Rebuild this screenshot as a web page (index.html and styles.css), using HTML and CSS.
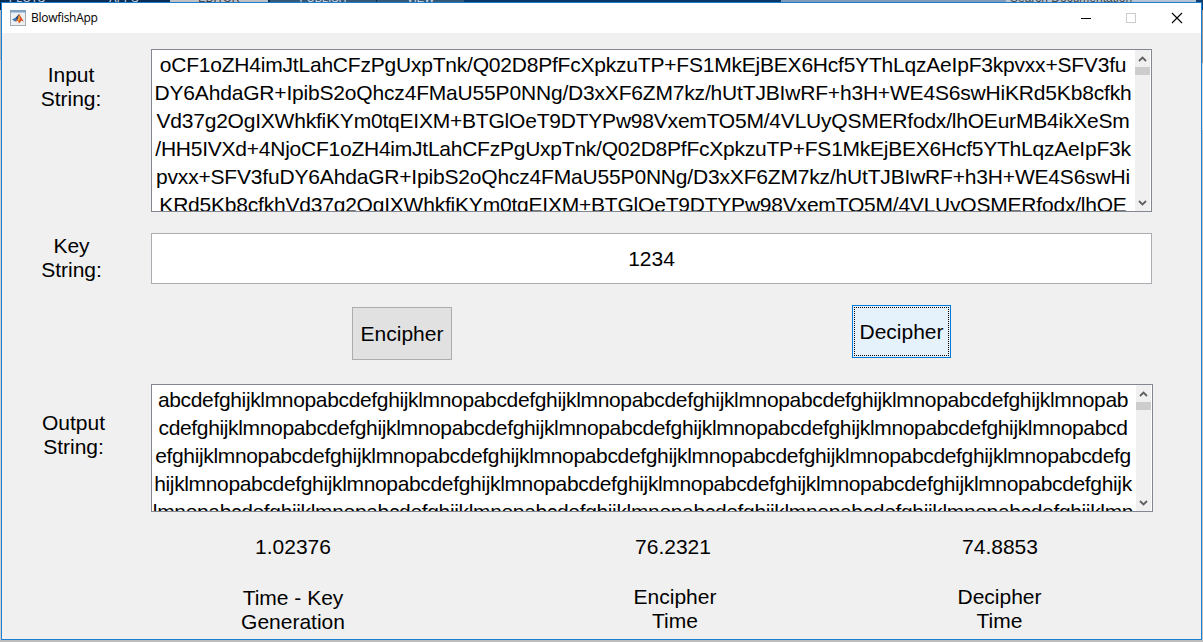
FILE: index.html
```html
<!DOCTYPE html>
<html lang="en">
<head>
<meta charset="utf-8">
<title>BlowfishApp</title>
<link rel="stylesheet" href="styles.css">
</head>
<body>
<div class="desktop">
  <div class="ribbon">
    <span class="tab tab-plots">PLOTS</span><span class="tab tab-apps">APPS</span><span class="tab tab-editor">EDITOR</span><span class="tab tab-publish">PUBLISH</span><span class="tab tab-view">VIEW</span><span class="ribbon-fill"></span><span class="ribbon-tools"></span><span class="ribbon-search">Search Documentation</span><span class="ribbon-end"></span>
  </div>
  <div class="middle">
    <div class="edge-left"></div>
    <main class="window">
      <header class="titlebar">
        <svg class="app-icon" width="16" height="16" viewBox="0 0 16 16">
          <rect x=".5" y=".5" width="15" height="15" fill="#eef1f4" stroke="#a3abb3"/>
          <rect x="0" y="0" width="16" height="2.5" fill="#7fa3c4"/>
          <path d="M2 9.5 5.5 7.8 7.5 10 5 11.5z" fill="#3a78b5"/>
          <path d="M5.5 7.8 9.3 3.8 8.5 8.5 7 10z" fill="#2b4a78"/>
          <path d="M9.3 3.8 11 7 14 12 11.5 10.5 9 13.5 8 11 5 11.5 7.6 9.5z" fill="#d8501f"/>
          <path d="M9.3 4 10 9 8.6 12 7.6 10z" fill="#f2a23c"/>
        </svg>
        <span class="title">BlowfishApp</span>
        <svg class="controls" width="104" height="14" viewBox="0 0 104 14" fill="none">
          <path d="M0 7.5H10" stroke="#000"/>
          <rect x="45.5" y="2.5" width="9" height="9" stroke="#ccc"/>
          <path d="M91 2 101 12M101 2 91 12" stroke="#000" stroke-width="1.1"/>
        </svg>
      </header>
      <div class="form">
        <div class="row row-input">
          <div class="label">Input<br>String:</div>
          <div class="area">
            <div class="lines">
              <div class="line">oCF1oZH4imJtLahCFzPgUxpTnk/Q02D8PfFcXpkzuTP+FS1MkEjBEX6Hcf5YThLqzAeIpF3kpvxx+SFV3fu</div>
              <div class="line wide">DY6AhdaGR+IpibS2oQhcz4FMaU55P0NNg/D3xXF6ZM7kz/hUtTJBIwRF+h3H+WE4S6swHiKRd5Kb8cfkh</div>
              <div class="line">Vd37g2OgIXWhkfiKYm0tqEIXM+BTGlOeT9DTYPw98VxemTO5M/4VLUyQSMERfodx/lhOEurMB4ikXeSm</div>
              <div class="line narrow">/HH5IVXd+4NjoCF1oZH4imJtLahCFzPgUxpTnk/Q02D8PfFcXpkzuTP+FS1MkEjBEX6Hcf5YThLqzAeIpF3k</div>
              <div class="line wide">pvxx+SFV3fuDY6AhdaGR+IpibS2oQhcz4FMaU55P0NNg/D3xXF6ZM7kz/hUtTJBIwRF+h3H+WE4S6swHi</div>
              <div class="line">KRd5Kb8cfkhVd37g2OgIXWhkfiKYm0tqEIXM+BTGlOeT9DTYPw98VxemTO5M/4VLUyQSMERfodx/lhOE</div>
            </div>
            <div class="scroll">
              <svg width="9" height="6" viewBox="0 0 9 6"><path d="M1 5 4.5 1.5 8 5" class="chev"/></svg>
              <div class="thumb"></div>
              <svg width="9" height="6" viewBox="0 0 9 6"><path d="M1 1 4.5 4.5 8 1" class="chev"/></svg>
            </div>
          </div>
        </div>
        <div class="row row-key">
          <div class="label">Key<br>String:</div>
          <div class="key">1234</div>
        </div>
        <div class="buttons">
          <button class="btn">Encipher</button>
          <button class="btn btn-focus"><span>Decipher</span></button>
        </div>
        <div class="row row-output">
          <div class="label">Output<br>String:</div>
          <div class="area area-out">
            <div class="lines lines-out">
              <div class="line">abcdefghijklmnopabcdefghijklmnopabcdefghijklmnopabcdefghijklmnopabcdefghijklmnopabcdefghijklmnopab</div>
              <div class="line">cdefghijklmnopabcdefghijklmnopabcdefghijklmnopabcdefghijklmnopabcdefghijklmnopabcdefghijklmnopabcd</div>
              <div class="line">efghijklmnopabcdefghijklmnopabcdefghijklmnopabcdefghijklmnopabcdefghijklmnopabcdefghijklmnopabcdefg</div>
              <div class="line">hijklmnopabcdefghijklmnopabcdefghijklmnopabcdefghijklmnopabcdefghijklmnopabcdefghijklmnopabcdefghijk</div>
              <div class="line">lmnopabcdefghijklmnopabcdefghijklmnopabcdefghijklmnopabcdefghijklmnopabcdefghijklmnopabcdefghijklmn</div>
            </div>
            <div class="scroll">
              <svg width="9" height="6" viewBox="0 0 9 6"><path d="M1 5 4.5 1.5 8 5" class="chev"/></svg>
              <div class="thumb"></div>
              <svg width="9" height="6" viewBox="0 0 9 6"><path d="M1 1 4.5 4.5 8 1" class="chev"/></svg>
            </div>
          </div>
        </div>
        <div class="times">
          <div class="time t1"><div class="value">1.02376</div><div class="name">Time - Key<br>Generation</div></div>
          <div class="time t2"><div class="value">76.2321</div><div class="name">Encipher<br>Time</div></div>
          <div class="time t3"><div class="value">74.8853</div><div class="name">Decipher<br>Time</div></div>
        </div>
      </div>
    </main>
    <div class="edge-right"></div>
  </div>
  <div class="below"></div>
</div>
</body>
</html>
```

FILE: styles.css
```css
* { box-sizing: border-box; }
body { margin: 0; overflow: hidden; font-family: "Liberation Sans", Arial, sans-serif; font-size: 21px; line-height: 24px; color: #000; }
.desktop { width: 1203px; height: 642px; display: flex; flex-direction: column; background: #bdbdbd; }
.ribbon { height: 2px; display: flex; overflow: hidden; background: #0b2d55; font-size: 11px; line-height: 12px; color: #d5dde6; align-items: flex-end; }
.tab { height: 12px; text-align: center; flex: none; margin-bottom: -2px; }
.tab-plots { width: 78px; padding-right: 24px; }
.tab-apps { width: 92px; }
.tab-editor { width: 98px; background: #bfc1c4; color: #33333b; }
.tab-publish { width: 106px; background: #365877; margin-left: 2px; }
.tab-view { width: 87px; background: #365877; margin-left: 1px; }
.ribbon-fill { width: 317px; height: 2px; background: #0b3767; flex: none; }
.ribbon-tools { width: 225px; height: 2px; background: #829bb9; flex: none; }
.ribbon-search { width: 190px; height: 12px; padding-left: 4px; background: #b9c4d2; color: #444; flex: none; font-size: 12px; margin-bottom: -2px; }
.ribbon-end { flex: 1; height: 2px; background: #123e70; }
.middle { display: flex; height: 638px; }
.edge-left { width: 1px; flex: none; background: linear-gradient(#0b2d55 8px, #b5b5b5 8px 16px, #aeb4bd 57px 58px, #d0d0d0 58px); }
.edge-right { width: 1px; flex: none; background: linear-gradient(#123e70 8px, #999 8px 60px, #dadada 62px 128px, #c6c6c6 128px); }
.window { width: 1201px; flex: none; border: 1px solid #1b7fd1; background: #f0f0f0; }
.titlebar { height: 30px; background: #fff; display: flex; align-items: center; padding-left: 8px; }
.app-icon { flex: none; margin-top: -1px; }
.title { margin-left: 5px; font: 12px/16px "Open Sans", "Noto Sans", sans-serif; letter-spacing: -.28px; flex: 1; }
.controls { margin-right: 16px; margin-top: -1px; }
.form { height: 606px; overflow: hidden; padding-top: 16px; }
.row { display: flex; align-items: flex-start; }
.label { width: 149px; padding-right: 11px; text-align: center; flex: none; }
.row-input { height: 184px; }
.row-input .label { padding-top: 14px; }
.area { width: 1001px; height: 163px; border: 1px solid #828790; background: #fff; display: flex; overflow: hidden; }
.lines { width: 983px; flex: none; padding: 1px 1px 0 0; height: 161px; overflow: hidden; letter-spacing: -.21px; }
.line { height: 28px; line-height: 28px; white-space: nowrap; display: flex; justify-content: center; }
.wide { letter-spacing: -.18px; }
.narrow { letter-spacing: -.24px; }
.scroll { width: 15px; height: 100%; background: #f0f0f0; display: flex; flex-direction: column; align-items: center; padding: 6px 0 5px; }
.thumb { width: 15px; height: 8px; background: #cdcdcd; margin: 5px 0 auto; flex: none; }
.chev { fill: none; stroke: #606060; stroke-width: 1.8; }
.row-key { height: 72px; }
.row-key .label { padding-top: 1px; padding-right: 10px; }
.key { width: 1001px; height: 51px; border: 1px solid #abadb3; background: #fff; text-align: center; line-height: 50px; }
.buttons { display: flex; height: 79px; padding-left: 350px; gap: 400px; }
.btn { font: inherit; width: 100px; height: 53px; margin: 2px 0 0; padding: 0; border: 1px solid #adadad; background: #e1e1e1; color: #000; }
.btn-focus { width: 99px; margin-top: 0; background: #e5f1fb; border-color: #0078d7; padding: 1px; }
.btn-focus span { display: flex; align-items: center; justify-content: center; height: 49px; border: 1px dotted #000; }
.row-output { height: 151px; }
.row-output .label { padding-top: 27px; padding-right: 6px; }
.area-out { width: 1002px; height: 128px; }
.lines-out { width: 984px; height: 126px; padding: 1px 2px 0 0; letter-spacing: -.345px; }
.times { display: flex; }
.time { text-align: center; flex: none; }
.t1 { width: 582px; }
.t2 { width: 178px; }
.t2 .name { padding-left: 4px; }
.t3 { width: 438px; padding-left: 38px; }
.t3 .name { padding-right: 1px; }
.name { margin-top: 27px; }
.t2 .name, .t3 .name { margin-top: 26px; }
```
